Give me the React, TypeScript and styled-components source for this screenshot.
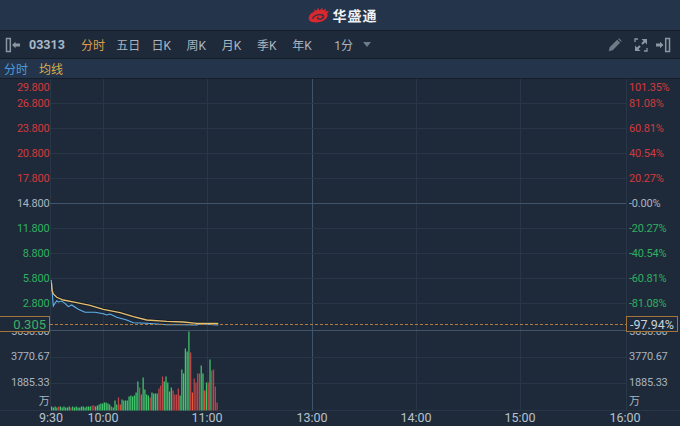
import styled, { createGlobalStyle } from "styled-components";

const GlobalStyle = createGlobalStyle`
    html, body {
        margin: 0;
        padding: 0;
        background: #1e2a39;
    }
    #root {
        width: 680px;
        height: 426px;
        overflow: hidden;
    }
`

const RED = '#d03a3d'
const GREEN = '#2fb060'
const AXIS = '#a9b4c0'
const GRID = '#283748'
const STRONG_GRID = '#41546a'

const tabs = ['分时', '五日', '日K', '周K', '月K', '季K', '年K']

const priceRows = [
    { y: 87, price: '29.800', rate: '101.35%', color: RED },
    { y: 103, price: '26.800', rate: '81.08%', color: RED },
    { y: 128, price: '23.800', rate: '60.81%', color: RED },
    { y: 153, price: '20.800', rate: '40.54%', color: RED },
    { y: 178, price: '17.800', rate: '20.27%', color: RED },
    { y: 203, price: '14.800', rate: '-0.00%', color: AXIS },
    { y: 228, price: '11.800', rate: '-20.27%', color: GREEN },
    { y: 253, price: '8.800', rate: '-40.54%', color: GREEN },
    { y: 278, price: '5.800', rate: '-60.81%', color: GREEN },
    { y: 303, price: '2.800', rate: '-81.08%', color: GREEN },
]

const volumeRows = [
    { y: 331, text: '5656.00' },
    { y: 356, text: '3770.67' },
    { y: 382, text: '1885.33' },
    { y: 401, text: '万' },
]

const timeLabels = [
    { x: 51, text: '9:30' },
    { x: 103, text: '10:00' },
    { x: 207, text: '11:00' },
    { x: 312, text: '13:00' },
    { x: 416, text: '14:00' },
    { x: 520, text: '15:00' },
    { x: 625, text: '16:00' },
]

const verticalLines = [50, 103, 207, 416, 520, 626]
const horizontalLines = [103, 128, 153, 178, 228, 253, 278, 303, 357, 383]

const averageLine = '51.5,283 52,290 53.3,294 56.7,297.3 63.3,300 76.7,302.7 90,305.3 103.3,309.3 120,312.7 133.3,316.7 146.7,320 166.7,321.3 183.3,322 196.7,323.3 218.3,323.3'
const priceLine = '51.3,280 52,290 53.3,306 55,303.3 56.7,300.7 58.3,302 61.7,301 65,303.3 68.3,306.7 71.7,305 78.3,309.3 85,312.3 95,312.3 103.3,313.7 106.7,315 110,314 116.7,317.3 126.7,320 133.3,322.7 146.7,323.3 166.7,324.7 181.7,324.7 196.7,325 200,324 218.3,325'

type Bar = [number, 'g' | 'r' | 'o']
const bars: Bar[] = [
    [4, 'g'], [3, 'g'], [4, 'g'], [3, 'g'], [4, 'r'], [4, 'g'], [3, 'g'], [4, 'g'], [3, 'g'], [3, 'g'],
    [4, 'g'], [3, 'r'], [4, 'g'], [3, 'g'], [4, 'g'], [3, 'g'], [3, 'g'], [4, 'g'], [4, 'g'], [3, 'g'],
    [4, 'g'], [4, 'g'], [4, 'g'], [5, 'r'], [5, 'r'], [4, 'g'], [5, 'g'], [6, 'g'], [7, 'g'], [7, 'g'],
    [8, 'g'], [8, 'g'], [7, 'g'], [6, 'g'], [4, 'o'], [3, 'g'], [10, 'g'], [6, 'g'], [13, 'r'], [6, 'o'],
    [11, 'g'], [10, 'g'], [10, 'g'], [10, 'g'], [14, 'g'], [15, 'g'], [14, 'g'], [15, 'g'], [18, 'g'], [29, 'g'],
    [23, 'r'], [16, 'o'], [33, 'g'], [21, 'g'], [16, 'g'], [15, 'g'], [13, 'r'], [18, 'g'], [17, 'g'], [17, 'g'],
    [17, 'g'], [22, 'r'], [25, 'r'], [34, 'r'], [29, 'g'], [34, 'g'], [28, 'g'], [19, 'g'], [23, 'g'], [20, 'r'],
    [16, 'r'], [16, 'r'], [22, 'r'], [15, 'g'], [41, 'g'], [37, 'g'], [62, 'g'], [59, 'g'], [79, 'g'], [58, 'r'],
    [18, 'o'], [32, 'r'], [28, 'r'], [37, 'r'], [37, 'r'], [45, 'g'], [37, 'g'], [20, 'o'], [28, 'g'], [28, 'r'],
    [51, 'g'], [40, 'r'], [41, 'r'], [24, 'r'], [8, 'r'],
]

const barColors = { g: '#43c56c', r: '#c24649', o: '#e8593a' }

const LeftCollapseIcon = () => (
    <svg width="16" height="16" viewBox="0 0 16 16">
        <rect x="1.5" y="1.5" width="3.8" height="13" fill="none" stroke="#8b96a2" strokeWidth="1.5" />
        <path d="M7 8 L10.5 4.8 V6.6 H15 V9.4 H10.5 V11.2 Z" fill="#8b96a2" />
    </svg>
)

const RightCollapseIcon = () => (
    <svg width="16" height="16" viewBox="0 0 16 16">
        <rect x="10.7" y="1.5" width="3.8" height="13" fill="none" stroke="#8b96a2" strokeWidth="1.5" />
        <path d="M8.5 8 L5 4.8 V6.6 H1 V9.4 H5 V11.2 Z" fill="#8b96a2" />
    </svg>
)

const PencilIcon = () => (
    <PencilSvg width="14" height="14" viewBox="0 0 15 15">
        <path d="M0.8 14.2 L1.8 10 L9.8 2 L13 5.2 L5 13.2 Z M10.8 1 L11.8 0.4 L14.6 3.2 L14 4.2 Z" fill="#707b87" />
    </PencilSvg>
)

const ExpandIcon = () => (
    <svg width="14" height="14" viewBox="0 0 14 14">
        <path d="M1 4 V1 H4 M10 13 H13 V10" fill="none" stroke="#8b96a2" strokeWidth="1.3" />
        <path d="M7.5 1 H13 V6.5 L11 4.5 L8.8 6.7 L7.3 5.2 L9.5 3 Z M1 7.5 V13 H6.5 L4.5 11 L6.7 8.8 L5.2 7.3 L3 9.5 Z" fill="#8b96a2" />
    </svg>
)

const LogoMark = () => (
    <svg width="22" height="16" viewBox="0 0 17 15" preserveAspectRatio="none">
        <path
            d="M0.5 10 C0.8 7 3 5 5 4.2 L4.8 2.2 L6.6 3.6 L7.6 0.8 L9 3.2 L11 0.4 L11.4 3.2 L14 1.4 L13.4 4.2 L16.2 3.6 L14.8 6 C15.6 7.6 15 10 13 12 C10.6 14.4 6 15 3.2 14 C1.4 13.4 0.4 12 0.5 10 Z"
            fill="#d9282e"
        />
        <path d="M3.5 11 C4 8 8 6.5 10.8 7.4 C12.8 8.2 12 11 9.6 11.4 C8 11.6 7 10.6 7.8 9.6" fill="none" stroke="#24344a" strokeWidth="1.2" />
    </svg>
)

export default function App() {
    return (
        <>
            <GlobalStyle />
            <Page>
                <Header>
                    <LogoMark />
                    <LogoText>华盛通</LogoText>
                </Header>
                <Toolbar>
                    <LeftCollapseIcon />
                    <StockCode>03313</StockCode>
                    <TabList>
                        {tabs.map((tab, i) => (
                            <Tab key={tab} $active={i === 0}>{tab}</Tab>
                        ))}
                    </TabList>
                    <PeriodSelect>
                        1分
                        <Caret />
                    </PeriodSelect>
                    <ToolIcons>
                        <PencilIcon />
                        <ExpandIcon />
                        <RightCollapseIcon />
                    </ToolIcons>
                </Toolbar>
                <Legend>
                    <LegendItem $color="#4b9bdc">分时</LegendItem>
                    <LegendItem $color="#d9ae4f">均线</LegendItem>
                </Legend>
                <ChartArea>
                    <ChartSvg width="680" height="347" viewBox="0 79 680 347">
                        {verticalLines.map(x => (
                            <line key={x} x1={x + 0.5} x2={x + 0.5} y1="79" y2="410" stroke={GRID} />
                        ))}
                        <line x1="312.5" x2="312.5" y1="79" y2="410" stroke={STRONG_GRID} />
                        {horizontalLines.map(y => (
                            <line key={y} x1="50" x2="626" y1={y + 0.5} y2={y + 0.5} stroke={GRID} />
                        ))}
                        <line x1="0" x2="680" y1="410.5" y2="410.5" stroke={GRID} />
                        <line x1="50" x2="626" y1="203.5" y2="203.5" stroke={STRONG_GRID} />
                        <line x1="50" x2="626" y1="330.5" y2="330.5" stroke={STRONG_GRID} />

                        {bars.map(([h, c], i) => (
                            <rect key={i} x={51 + i * 1.76} y={410.5 - h} width="1.25" height={h} fill={barColors[c]} />
                        ))}

                        <polyline points={averageLine} fill="none" stroke="#141e2a" strokeWidth="3" />
                        <polyline points={priceLine} fill="none" stroke="#5fb0ec" strokeWidth="1.1" />
                        <polyline points={averageLine} fill="none" stroke="#e6bf70" strokeWidth="1.3" />
                        <line x1="50" x2="626" y1="324.5" y2="324.5" stroke="#b47d3e" strokeDasharray="3 2" />

                        {priceRows.map(row => (
                            <g key={row.y}>
                                <AxisText x="49.5" y={row.y + 4} textAnchor="end" fill={row.color}>{row.price}</AxisText>
                                <AxisText x="629" y={row.y + 4} fill={row.color}>{row.rate}</AxisText>
                            </g>
                        ))}
                        {volumeRows.map(row => (
                            <g key={row.y}>
                                <AxisText x="49.5" y={row.y + 4} textAnchor="end" fill={AXIS}>{row.text}</AxisText>
                                <AxisText x="629" y={row.y + 4} fill={AXIS}>{row.text}</AxisText>
                            </g>
                        ))}
                        {timeLabels.map(label => (
                            <TimeText key={label.text} x={label.x} y="422" textAnchor="middle">{label.text}</TimeText>
                        ))}
                    </ChartSvg>
                    <PriceBadge>0.305</PriceBadge>
                    <RateBadge>-97.94%</RateBadge>
                </ChartArea>
            </Page>
        </>
    )
}

const Page = styled.div`
    display: flex;
    flex-direction: column;
    width: 680px;
    height: 426px;
    background-color: #1e2a39;
    font-family: "Roboto", "Noto Sans CJK SC", sans-serif;
`

const Header = styled.div`
    display: flex;
    align-items: center;
    justify-content: center;
    gap: 3px;
    flex: 0 0 30px;
    padding-left: 5px;
    box-sizing: border-box;
    background-color: #24344a;
`

const LogoText = styled.span`
    color: #eef1f4;
    font-family: "Noto Sans CJK SC", sans-serif;
    font-size: 14px;
    font-weight: 700;
    letter-spacing: 1px;
`

const Toolbar = styled.div`
    display: flex;
    align-items: center;
    flex: 0 0 29px;
    box-sizing: border-box;
    padding: 0 9px 0 5px;
    background-color: #1e2a39;
    border-top: 1px solid #141d28;
    border-bottom: 1px solid #141d28;
`

const StockCode = styled.span`
    margin-left: 8px;
    width: 52px;
    color: #a9b8c8;
    font-size: 12.5px;
    font-weight: 700;
`

const TabList = styled.div`
    display: flex;
`

const Tab = styled.span<{ $active: boolean }>`
    width: 35.2px;
    color: ${({ $active }) => ($active ? '#dc9f4e' : '#a9b4c0')};
    font-size: 12px;
`

const PeriodSelect = styled.div`
    display: flex;
    align-items: center;
    gap: 10px;
    margin-left: 7px;
    color: #a9b4c0;
    font-size: 12px;
`

const Caret = styled.span`
    width: 0;
    height: 0;
    border-left: 4px solid transparent;
    border-right: 4px solid transparent;
    border-top: 5px solid #6f7b88;
`

const ToolIcons = styled.div`
    display: flex;
    align-items: center;
    gap: 7px;
    margin-left: auto;
`

const PencilSvg = styled.svg`
    margin-right: 5px;
`

const Legend = styled.div`
    display: flex;
    align-items: center;
    gap: 11px;
    flex: 0 0 20px;
    box-sizing: border-box;
    padding-left: 4px;
    background-color: #24344a;
    border-bottom: 1px solid #141d28;
`

const LegendItem = styled.span<{ $color: string }>`
    color: ${({ $color }) => $color};
    font-size: 12px;
`

const ChartArea = styled.div`
    position: relative;
    flex: 1;
`

const ChartSvg = styled.svg`
    display: block;
`

const AxisText = styled.text`
    font-family: "Roboto", "Noto Sans CJK SC", sans-serif;
    font-size: 11px;
    letter-spacing: -0.2px;
`

const TimeText = styled.text`
    fill: #b8c2cc;
    font-family: "Roboto", sans-serif;
    font-size: 12.5px;
`

const Badge = styled.div`
    position: absolute;
    top: 237px;
    height: 16px;
    box-sizing: border-box;
    display: flex;
    align-items: center;
    background-color: #1e2a39;
    border: 1px solid #a3743c;
    font-size: 13px;
`

const PriceBadge = styled(Badge)`
    left: -1px;
    width: 51px;
    justify-content: flex-end;
    padding-right: 3px;
    color: #3fae66;
`

const RateBadge = styled(Badge)`
    left: 626px;
    width: 52px;
    justify-content: center;
    color: #c9d1d9;
    font-size: 12.5px;
`
